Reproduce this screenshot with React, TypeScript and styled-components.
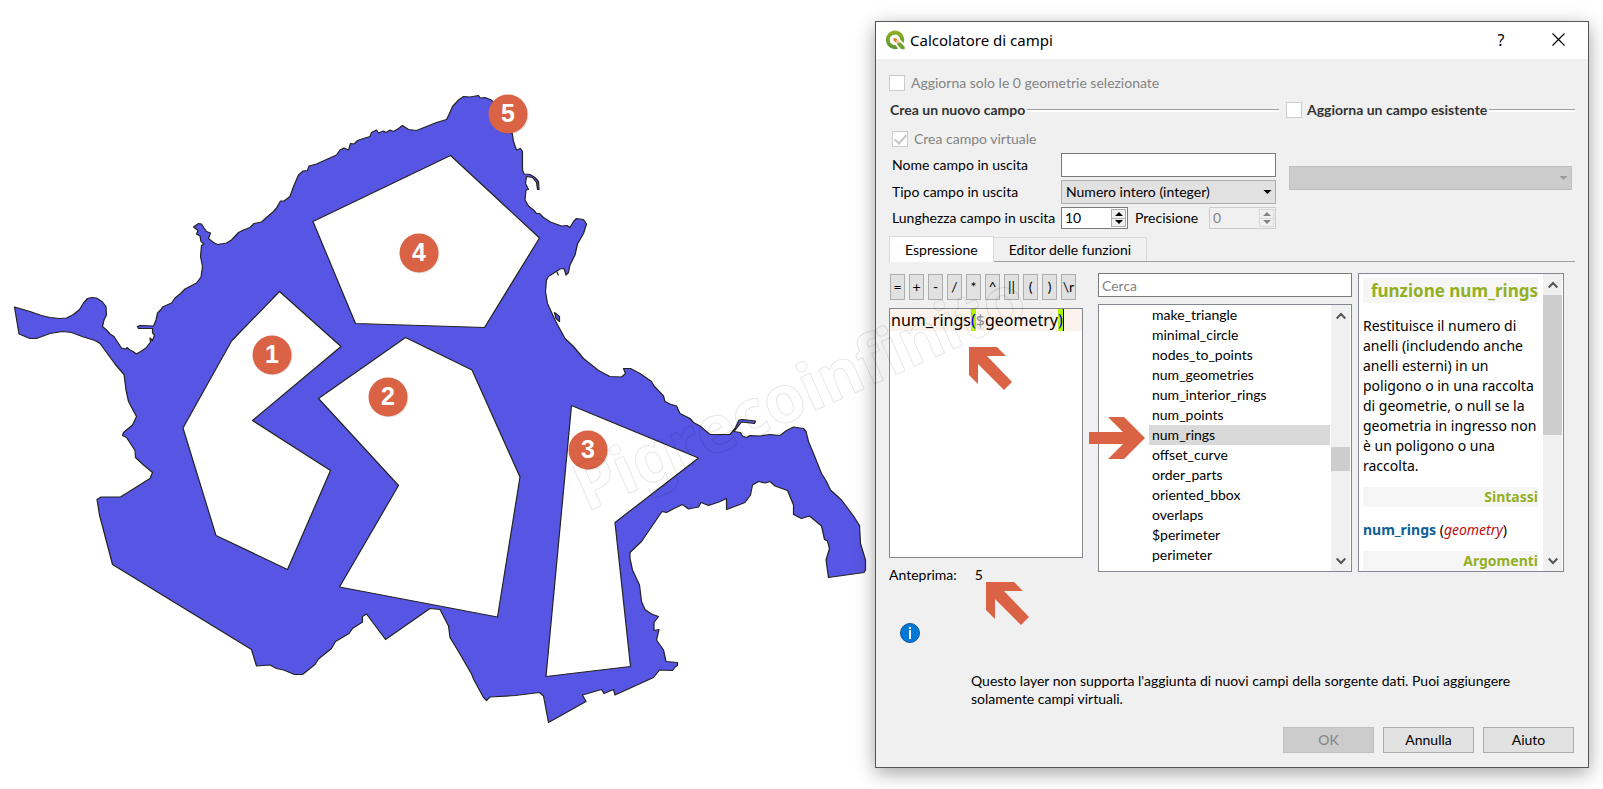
import React, { useState } from "react";
import styled, { createGlobalStyle } from "styled-components";

const UI = 'Lato, "Liberation Sans", sans-serif';
const SEGOE = '"Noto Sans", "Open Sans", sans-serif';
const ORANGE = "#d96344";
const LINE = "#adadad";
const FRAME = "#828790";
const FACE = "#f0f0f0";

const GlobalStyle = createGlobalStyle`
  * { box-sizing: border-box; }
  body { margin: 0; background: #fff; color: #000; font: 14px/18px ${UI}; }
  button, input, select, textarea { font: inherit; color: inherit; margin: 0; border-radius: 0; }
`;

const Page = styled.main`
  position: relative;
  display: grid;
  grid-template-columns: minmax(0, 875fr) minmax(0, 714fr);
  align-items: start;
  min-height: 100vh;
  padding-right: 14px;
  overflow: hidden;
`;
const MapFigure = styled.figure`
  margin: 0;
  svg { display: block; width: 100%; height: auto; }
`;
const Watermark = styled.svg`
  position: absolute;
  top: 0;
  left: 0;
  width: 100%;
  height: auto;
  pointer-events: none;
`;

const Dialog = styled.section`
  margin-top: 21px;
  border: 1px solid #555;
  background: ${FACE};
  box-shadow: 0 5px 18px rgba(0, 0, 0, 0.36);
`;
const TitleBar = styled.header`
  display: flex;
  align-items: center;
  gap: 5px;
  height: 37px;
  padding: 0 0 2px 9px;
  background: #fff;
  svg { display: block; }
`;
const Title = styled.h1`
  flex: 1;
  margin: 0;
  font: 400 15px/20px ${SEGOE};
`;
const TitleButtons = styled.div`
  display: grid;
  grid-template-columns: 54px 60px;
`;
const TitleButton = styled.button`
  display: grid;
  place-items: center;
  height: 35px;
  padding: 0;
  border: 0;
  background: none;
  font: 16px/20px ${SEGOE};
`;
const Body = styled.div`
  padding: 15px 13px 14px;
`;
const CheckLabel = styled.label<{ $bold?: boolean }>`
  display: flex;
  align-items: center;
  gap: ${(p) => (p.$bold ? 5 : 6)}px;
  height: 18px;
  color: ${(p) => (p.$bold ? "#333" : "#838383")};
  font-weight: ${(p) => (p.$bold ? 700 : 400)};
  white-space: nowrap;
`;
const Check = styled.input`
  position: relative;
  flex: none;
  appearance: none;
  width: 16px;
  height: 16px;
  border: 1px solid #ccc;
  background: #fff;
  &:checked::after {
    content: "";
    position: absolute;
    left: 4px;
    top: 0;
    width: 5px;
    height: 10px;
    border: solid #c4c4c4;
    border-width: 0 2px 2px 0;
    transform: rotate(42deg);
  }
`;
const Groups = styled.div`
  display: grid;
  grid-template-columns: minmax(0, 390fr) minmax(0, 289fr);
  gap: 7px;
  margin-top: 9px;
`;
const Group = styled.fieldset`
  min-width: 0;
  margin: 0;
  padding: 0;
  border: 0;
`;
const GroupTitle = styled.div<{ $inset?: boolean }>`
  display: flex;
  align-items: center;
  gap: 2px;
  height: 18px;
  padding-left: ${(p) => (p.$inset ? 1 : 0)}px;
  color: #333;
  font-weight: 700;
  white-space: nowrap;
  &::after {
    content: "";
    flex: 1;
    height: 2px;
    border-top: 1px solid #a0a0a0;
    background: #fff;
  }
`;
const Form = styled.div`
  display: grid;
  grid-template-columns: 169px minmax(0, 1fr);
  row-gap: 3px;
  align-items: center;
  padding: 11px 3px 0;
`;
const ExistingField = styled.div`
  padding: 47px 3px 0;
`;
const Wide = styled.div`
  grid-column: 1 / -1;
  margin-bottom: 2px;
`;
const FieldLabel = styled.label`
  white-space: nowrap;
`;
const TextField = styled.input`
  width: 100%;
  height: 24px;
  padding: 0 3px;
  border: 1px solid #7a7a7a;
  background: #fff;
  &::placeholder { color: #838383; opacity: 1; }
`;
const SelectWrap = styled.div<{ $off?: boolean }>`
  position: relative;
  color: ${(p) => (p.$off ? "#9b9b9b" : "#000")};
  svg {
    position: absolute;
    right: 4px;
    top: 10px;
    pointer-events: none;
  }
  select {
    appearance: none;
    display: block;
    width: 100%;
    height: 24px;
    padding: 0 16px 0 4px;
    border: 1px solid ${(p) => (p.$off ? "#bfbfbf" : LINE)};
    background: ${(p) => (p.$off ? "#ccc" : "#e1e1e1")};
    opacity: 1;
  }
`;
const SpinRow = styled.div`
  display: grid;
  grid-template-columns: 67px 1fr 67px;
  align-items: center;
  label { padding-left: 7px; }
`;
const Spin = styled.div<{ $off?: boolean }>`
  display: flex;
  height: 22px;
  padding: 1px;
  border: 1px solid ${(p) => (p.$off ? "#ccc" : "#7a7a7a")};
  background: ${(p) => (p.$off ? FACE : "#fff")};
  color: ${(p) => (p.$off ? "#838383" : "#000")};
  input {
    flex: 1;
    min-width: 0;
    padding: 0 2px;
    border: 0;
    background: none;
    appearance: textfield;
  }
  input::-webkit-inner-spin-button { appearance: none; }
`;
const SpinButtons = styled.div<{ $off?: boolean }>`
  display: grid;
  grid-template-rows: 1fr 1fr;
  width: 15px;
  border: 1px solid ${(p) => (p.$off ? "#d9d9d9" : LINE)};
  background: ${(p) => (p.$off ? "#d9d9d9" : LINE)};
  gap: 1px;
  button {
    display: grid;
    place-items: center;
    padding: 0;
    border: 0;
    background: ${FACE};
    color: inherit;
  }
`;
const Tabs = styled.div`
  display: flex;
  align-items: flex-end;
  margin-top: 7px;
  border-bottom: 1px solid #a0a0a0;
`;
const Tab = styled.button<{ $active?: boolean }>`
  height: ${(p) => (p.$active ? 26 : 24)}px;
  margin-bottom: ${(p) => (p.$active ? -1 : 0)}px;
  padding: 0 15px;
  border: 1px solid #d9d9d9;
  border-bottom: 0;
  border-left-width: ${(p) => (p.$active ? 1 : 0)}px;
  background: ${(p) => (p.$active ? "#fff" : FACE)};
`;
const Workspace = styled.div`
  display: grid;
  grid-template-columns: minmax(0, 209fr) minmax(0, 260fr) minmax(0, 206fr);
  padding: 11px 11px 0 0;
`;
const EditorColumn = styled.div`
  position: relative;
  display: flex;
  flex-direction: column;
  margin-right: 15px;
  min-width: 0;
`;
const Operators = styled.div`
  display: flex;
  gap: 4px;
  padding: 1px 0 0 1px;
`;
const Operator = styled.button`
  width: 15px;
  height: 26px;
  padding: 0;
  border: 1px solid ${LINE};
  background: #e1e1e1;
  white-space: nowrap;
  overflow: hidden;
`;
const Editor = styled.div`
  position: relative;
  height: 250px;
  margin-top: 8px;
  border: 1px solid ${FRAME};
  background: #fff;
  font: 16px/22px ${SEGOE};
`;
const CodeLine = styled.div`
  padding-left: 1px;
  background: #fdf3ed;
  white-space: pre;
`;
const Paren = styled.span`
  display: inline-block;
  background: #b4f500;
  color: #0000e0;
`;
const Sigil = styled.span`
  color: #909090;
`;
const Caret = styled.span`
  border-left: 1px solid #000;
`;
const EditorInput = styled.textarea`
  position: absolute;
  inset: 0;
  width: 100%;
  height: 100%;
  padding: 0 1px;
  border: 0;
  outline: 0;
  resize: none;
  background: transparent;
  color: transparent;
  caret-color: #000;
`;
const Pointer = styled.svg<{ $x: number; $y: number }>`
  position: absolute;
  left: ${(p) => p.$x}px;
  top: ${(p) => p.$y}px;
  fill: ${ORANGE};
  pointer-events: none;
`;
const Preview = styled.div`
  position: relative;
  display: flex;
  gap: 18px;
  margin-top: 8px;
  height: 18px;
`;
const FunctionColumn = styled.div`
  display: flex;
  flex-direction: column;
  gap: 7px;
  height: 299px;
  margin-right: 6px;
  min-width: 0;
`;
const Framed = styled.div`
  position: relative;
  display: flex;
  flex: 1;
  min-height: 0;
  border: 1px solid ${FRAME};
  background: #fff;
`;
const Functions = styled.ul`
  flex: 1;
  margin: 0;
  padding: 0 1px 0 50px;
  list-style: none;
`;
const FunctionItem = styled.li<{ $selected?: boolean }>`
  height: 20px;
  padding-left: 3px;
  line-height: 20px;
  background: ${(p) => (p.$selected ? "#d9d9d9" : "none")};
`;
const ScrollTrack = styled.div`
  display: flex;
  flex-direction: column;
  flex: none;
  width: 20px;
  border-right: 1px solid #fff;
  background: ${FACE};
`;
const ScrollButton = styled.button`
  display: grid;
  place-items: center;
  width: 19px;
  height: 21px;
  padding: 0;
  border: 0;
  background: none;
`;
const Space = styled.div<{ $grow: number }>`
  flex: ${(p) => p.$grow} 0 0;
`;
const Thumb = styled.div<{ $size: number }>`
  height: ${(p) => p.$size}px;
  background: #cdcdcd;
`;
const Help = styled(Framed)`
  height: 299px;
`;
const HelpText = styled.article`
  flex: 1;
  min-width: 0;
  padding: 4px 5px 0 4px;
  overflow: hidden;
  font: 14px/20px ${SEGOE};
  p { margin: 13px 0 11px; }
`;
const HelpTitle = styled.h2<{ $large?: boolean }>`
  margin: 0;
  background: #f6f6f6;
  color: #93b023;
  font-weight: 700;
  font-size: ${(p) => (p.$large ? 17 : 14)}px;
  line-height: ${(p) => (p.$large ? 25 : 20)}px;
  text-align: right;
  white-space: nowrap;
`;
const Syntax = styled.p`
  white-space: nowrap;
  b { color: #0a6099; }
  i { color: #bf0c0c; }
`;
const Notice = styled.div`
  display: grid;
  grid-template-columns: 71px 1fr;
  padding: 39px 40px 0 11px;
  svg { display: block; }
  p { margin: 49px 0 0; }
`;
const Actions = styled.footer`
  display: flex;
  justify-content: flex-end;
  gap: 9px;
  padding-right: 1px;
  margin-top: 19px;
`;
const ActionButton = styled.button`
  width: 91px;
  height: 26px;
  padding: 0;
  border: 1px solid ${LINE};
  background: #e1e1e1;
  &:disabled { border-color: #bfbfbf; background: #ccc; color: #838383; }
`;

const COAST =
  "M14.5 307L30 311.5L41.5 315.5L50 317.5L60 318.5L66.5 318L73.5 314.5L79.5 309.5L83.5 303L87.5 298.5L91.5 297.5L96.5 298L102.5 302L106 306.5L106.5 315L104 320L102.5 326.5L106.5 330L110 334L114 336.5L118.5 343.5L121.5 348L126 349L127 347.5L130 350L133 351.5L136.5 354L141.5 351L146 348L150.5 342L150 338L152.5 340.5L154.5 335L152.5 333L152.5 328.5L138.5 328.5L137.5 326.5L140 325.5L153.5 326L156 320L157.5 313L161.5 309L162.5 307L171.5 303L175 298L180 294L185 289L196.5 283L201 277L202.5 266.5L200.5 256.5L201.5 245.5L204 244L201 241.5L200 236L196.5 234L198 230.5L193.5 227L198.5 223.5L201.5 224L204 228L206.5 231.5L210.5 233L208.5 238.5L213.5 242.5L217.5 244.5L226.5 243L231.5 240L238.5 232.5L243.5 230L250 227.5L254 223.5L261.5 222L266.5 217.5L273.5 211.5L276.5 208L280.5 201L284 201L290 196.5L293.5 186.5L298.5 175L303 171L307.5 170.5L309 166L316.5 164L336.5 155L340 150L344 148L348.5 150L350.5 143.5L354 144L357.5 140.5L363.5 138.5L370 136.5L371.5 132.5L376.5 130L378.5 133L383.5 131L386 132.5L390 130L393.5 131.5L398.5 128.5L402.5 125.5L408.5 129.5L416.5 130.5L426.5 126.5L436.5 122.5L446.5 119.5L449.5 113.5L452.5 106.5L458.5 100L463.5 96.5L470 97L478.5 95.5L480 98L485 97.5L491.5 100L497 107L510 123L512.5 135L513.5 141.5L516.5 150L520.5 148.5L522.5 151.5L522.5 170L524 174L530 174.5L535 177.5L538.5 181.5L539 189.5L537.5 189.5L536.5 182.5L532.5 177.5L526.5 176.5L525.5 183.5L528.5 189.5L526 190L525 200L528.5 206L533.5 210L536.5 213.5L539.5 213.5L543.5 217.5L550.5 222L561.5 226L567 225.5L570 227.5L573.5 221.5L576.5 218.5L583.5 219.5L586.5 224L583.5 233.5L577.5 244L575 255L570 265L568.5 272.5L566 275L564 268.5L560 269L548.5 276.5L546.5 280L545.5 291.5L547.5 303.5L555 320L565 338.5L573.5 346.5L583.5 358.5L598.5 370.5L610 376.5L621.5 377L625.5 373.5L623.5 368.5L630.5 368.5L640 373.5L651.5 381.5L654 386L663.5 396L665 401.5L670 404L676.5 406L680 413.5L690 418.5L693.5 422.5L700 426L710 434.5L730 434.5L735 428.5L739 420L742.5 419.5L755.5 421L754.5 423.5L741.5 422L734 431.5L740.5 432.5L742.5 436L746.5 437.5L750 435.5L760 436L770 434.5L780 435.5L786.5 430.5L793.5 427L803.5 428.5L806 431.5L808.5 441.5L813.5 453.5L821.5 473.5L826.5 481.5L830.5 490L841.5 500L853.5 516L859.5 525.5L860.5 543.5L865.5 560L865.5 570L864 572.5L828.5 577.5L826 560L829.5 548.5L827.5 541L824.5 539.5L821.5 526L809.5 516L801.5 518.5L793.5 514.5L793.5 505L787.5 490.5L775 486L770 481.5L765 483L758.5 481.5L752.5 485L750.5 495L745 502.5L736 506L726.5 509.5L726.5 498.5L719 502L708.5 505.5L701 502.5L698.5 507L688.5 509L682.5 504.5L674 508.5L666.5 512.5L662 511.5L641.5 541.5L630 552.5L630 558.5L632.5 570L639.5 585L641.5 601.5L645 609.5L651.5 614L658.5 616.5L654 622.5L654 630.5L659 629.5L656.5 640L663.5 650L666 661.5L677.5 662.5L677.5 665.5L675 667L672.5 670.5L659.5 670L653.5 677.5L615 695L613.5 689.5L604 693.5L601.5 689.5L582.5 695L586 701.5L548.5 722.5L543.5 696L539.5 692.5L515 695.5L490 697L486.5 700.5L483.5 697.5L474 680L471.5 674L458.5 651.5L450 637.5L448.5 626L440 609.5L430 608.5L385.5 639.5L366.5 614L362.5 616.5L362.5 622L352.5 628.5L349 633.5L335.5 641.5L331.5 648.5L318.5 659L315 664.5L302.5 674.5L294.5 674.5L283.5 670L276.5 668.5L270 665L256.5 666L251.5 649.5L112.5 564.5L99.5 515L97 499.5L101 497L120.5 497L150 478.5L152.5 472.5L143.5 465L135.5 457.5L135 450.5L126.5 437.5L122.5 435.5L123.5 432.5L132.5 425L136.5 416.5L128.5 401.5L126 390L124 374.5L115 364L100 343.5L95 340.5L83.5 337L71.5 332.5L62.5 331.5L50 333.5L36.5 338.5L30 338.5L19 334Z";

const ISLAND = "M554.5 312.5L559.5 316.5L559.5 321.5L556 318.5Z M556.5 271L558.5 275.5";

const HOLES = [
  "279.5,291.5 231.5,341 183,428 216,535.5 287.5,569.5 330.5,470.5 252.5,420.5 341,346.5",
  "405.5,337.5 472,370 520,477 497.5,617 339.5,587 398.5,485.5 318.5,398.5",
  "571.5,405.5 698.5,458 615,522.5 630.5,666.5 546,676.5",
  "450.5,155.5 539.5,238 484.5,327.5 355.5,323.5 313,221.5",
];

const MARKERS = [
  { n: 1, x: 272, y: 355 },
  { n: 2, x: 388, y: 397 },
  { n: 3, x: 588, y: 450 },
  { n: 4, x: 419, y: 253 },
  { n: 5, x: 508, y: 114 },
];

const OPERATORS = ["=", "+", "-", "/", "*", "^", "||", "(", ")", "\\r"];

const FUNCTIONS = [
  "make_triangle",
  "minimal_circle",
  "nodes_to_points",
  "num_geometries",
  "num_interior_rings",
  "num_points",
  "num_rings",
  "offset_curve",
  "order_parts",
  "oriented_bbox",
  "overlaps",
  "$perimeter",
  "perimeter",
];

function PolygonMap() {
  return (
    <MapFigure>
      <svg viewBox="0 0 875 789" role="img" aria-label="Poligono con quattro anelli interni">
        <g fill="#5755e3" stroke="#232323" strokeWidth="1.2" strokeLinejoin="round">
          <path d={COAST} />
          <path d={ISLAND} />
          {HOLES.map((points) => (
            <polygon key={points} points={points} fill="#fff" />
          ))}
        </g>
        {MARKERS.map((m) => (
          <g key={m.n}>
            <circle cx={m.x + 1} cy={m.y + 1} r="19.5" fill="#000" opacity="0.1" />
            <circle cx={m.x} cy={m.y} r="19.5" fill={ORANGE} />
            <text
              x={m.x}
              y={m.y + 8}
              textAnchor="middle"
              fill="#fff"
              fontFamily="Liberation Sans, sans-serif"
              fontWeight="700"
              fontSize="25"
            >
              {m.n}
            </text>
          </g>
        ))}
      </svg>
    </MapFigure>
  );
}

function QgisLogo() {
  return (
    <svg width="20" height="20" viewBox="0 0 20 20" aria-hidden="true">
      <defs>
        <linearGradient id="leaf" x1="0" y1="0" x2="0" y2="1">
          <stop offset="0" stopColor="#93b023" />
          <stop offset="1" stopColor="#589632" />
        </linearGradient>
      </defs>
      <path
        fill="url(#leaf)"
        fillRule="evenodd"
        d="M9.8 .5a9.3 9.3 0 1 0 3.4 18.1l-3-3.6a5.2 5.2 0 1 1 4.8-5.6l3.6 3.7A9.3 9.3 0 0 0 9.8 .5z"
      />
      <path fill="#6fa32c" d="M12.4 12.4h3l4.2 4.2v2.7h-3.2l-4-4.2z" />
      <path fill="#ee7913" d="M8.4 8.2h2.6l2.2 2.2h-2v2.4l-2.8-2.4z" />
      <path fill="#f4b27c" d="M11.2 10.4h2l2.2 2h-3v2.7l-1.2-2.3z" />
    </svg>
  );
}

function Triangle({ up, wide }: { up?: boolean; wide?: boolean }) {
  const w = wide ? 9 : 8;
  return (
    <svg width={w} height="4" viewBox="0 0 8 4" fill="currentColor" aria-hidden="true">
      <path d={up ? "M0 4L4 0L8 4Z" : "M0 0L4 4L8 0Z"} />
    </svg>
  );
}

function SpinBox({ id, value, off }: { id: string; value: number; off?: boolean }) {
  const [n, setN] = useState(value);
  return (
    <Spin $off={off}>
      <input id={id} type="number" value={n} disabled={off} onChange={(e) => setN(Number(e.target.value))} />
      <SpinButtons $off={off}>
        <button type="button" aria-label="Aumenta" disabled={off} onClick={() => setN(n + 1)}>
          <Triangle up />
        </button>
        <button type="button" aria-label="Diminuisci" disabled={off} onClick={() => setN(n - 1)}>
          <Triangle />
        </button>
      </SpinButtons>
    </Spin>
  );
}

function ScrollBar({ before, size, after }: { before: number; size: number; after: number }) {
  return (
    <ScrollTrack>
      <ScrollButton type="button" aria-label="Scorri su">
        <svg width="10" height="8" viewBox="0 0 10 8" fill="none" stroke="#555" strokeWidth="2">
          <path d="M.7 6.5L5 2L9.3 6.5" />
        </svg>
      </ScrollButton>
      <Space $grow={before} />
      <Thumb $size={size} />
      <Space $grow={after} />
      <ScrollButton type="button" aria-label="Scorri giù">
        <svg width="10" height="8" viewBox="0 0 10 8" fill="none" stroke="#555" strokeWidth="2">
          <path d="M.7 1.5L5 6L9.3 1.5" />
        </svg>
      </ScrollButton>
    </ScrollTrack>
  );
}

function DiagonalArrow({ x, y }: { x: number; y: number }) {
  return (
    <Pointer $x={x} $y={y} width="43" height="43" viewBox="0 0 43 43" aria-hidden="true">
      <polygon points="0,0 28,0 37,9 18,9 43,35 35,43 9,17 9,37 0,28" />
    </Pointer>
  );
}

export default function App() {
  const [selected, setSelected] = useState("num_rings");
  return (
    <Page>
      <GlobalStyle />
      <PolygonMap />
      <Dialog aria-labelledby="title">
        <TitleBar>
          <QgisLogo />
          <Title id="title">Calcolatore di campi</Title>
          <TitleButtons>
            <TitleButton type="button">?</TitleButton>
            <TitleButton type="button" aria-label="Chiudi">
              <svg width="13" height="13" viewBox="0 0 13 13" stroke="#000" strokeWidth="1.2">
                <path d="M.5 .5L12.5 12.5M12.5 .5L.5 12.5" />
              </svg>
            </TitleButton>
          </TitleButtons>
        </TitleBar>
        <Body>
          <CheckLabel>
            <Check type="checkbox" disabled />
            Aggiorna solo le 0 geometrie selezionate
          </CheckLabel>
          <Groups>
            <Group aria-label="Crea un nuovo campo">
              <GroupTitle $inset>Crea un nuovo campo</GroupTitle>
              <Form>
                <Wide>
                  <CheckLabel>
                    <Check type="checkbox" defaultChecked disabled />
                    Crea campo virtuale
                  </CheckLabel>
                </Wide>
                <FieldLabel htmlFor="name">Nome campo in uscita</FieldLabel>
                <TextField id="name" type="text" />
                <FieldLabel htmlFor="type">Tipo campo in uscita</FieldLabel>
                <SelectWrap>
                  <select id="type">
                    <option>Numero intero (integer)</option>
                  </select>
                  <Triangle wide />
                </SelectWrap>
                <FieldLabel htmlFor="length">Lunghezza campo in uscita</FieldLabel>
                <SpinRow>
                  <SpinBox id="length" value={10} />
                  <FieldLabel htmlFor="precision">Precisione</FieldLabel>
                  <SpinBox id="precision" value={0} off />
                </SpinRow>
              </Form>
            </Group>
            <Group aria-label="Aggiorna un campo esistente">
              <GroupTitle>
                <CheckLabel $bold>
                  <Check type="checkbox" />
                  Aggiorna un campo esistente
                </CheckLabel>
              </GroupTitle>
              <ExistingField>
                <SelectWrap $off>
                  <select disabled aria-label="Campo esistente" />
                  <Triangle wide />
                </SelectWrap>
              </ExistingField>
            </Group>
          </Groups>
          <Tabs role="tablist">
            <Tab type="button" role="tab" aria-selected="true" $active>
              Espressione
            </Tab>
            <Tab type="button" role="tab" aria-selected="false">
              Editor delle funzioni
            </Tab>
          </Tabs>
          <Workspace>
            <EditorColumn>
              <Operators>
                {OPERATORS.map((op) => (
                  <Operator key={op} type="button">
                    {op}
                  </Operator>
                ))}
              </Operators>
              <Editor>
                <CodeLine aria-hidden="true">
                  num_rings<Paren>(</Paren>
                  <Sigil>$</Sigil>geometry<Paren>)</Paren>
                  <Caret />
                </CodeLine>
                <EditorInput aria-label="Espressione" spellCheck={false} defaultValue="num_rings($geometry)" />
                <DiagonalArrow x={79} y={38} />
              </Editor>
              <Preview>
                <span>Anteprima:</span>
                <output>5</output>
                <DiagonalArrow x={97} y={16} />
              </Preview>
            </EditorColumn>
            <FunctionColumn>
              <TextField type="search" placeholder="Cerca" aria-label="Cerca" />
              <Framed>
                <Functions role="listbox" aria-label="Funzioni">
                  {FUNCTIONS.map((name) => (
                    <FunctionItem
                      key={name}
                      role="option"
                      aria-selected={name === selected}
                      $selected={name === selected}
                      onClick={() => setSelected(name)}
                    >
                      {name}
                    </FunctionItem>
                  ))}
                </Functions>
                <ScrollBar before={121} size={24} after={79} />
                <Pointer $x={-10} $y={112} width="56" height="42" viewBox="0 0 56 42" aria-hidden="true">
                  <polygon points="0,15 34,15 19,0 35,0 56,21 35,42 19,42 34,27 0,27" />
                </Pointer>
              </Framed>
            </FunctionColumn>
            <Help>
              <HelpText>
                <HelpTitle $large>funzione num_rings</HelpTitle>
                <p>
                  Restituisce il numero di anelli (includendo anche anelli esterni) in un poligono o in una raccolta di
                  geometrie, o null se la geometria in ingresso non è un poligono o una raccolta.
                </p>
                <HelpTitle>Sintassi</HelpTitle>
                <Syntax>
                  <b>num_rings</b> (<i>geometry</i>)
                </Syntax>
                <HelpTitle>Argomenti</HelpTitle>
              </HelpText>
              <ScrollBar before={0} size={140} after={115} />
            </Help>
          </Workspace>
          <Notice>
            <svg width="20" height="20" viewBox="0 0 20 20" role="img" aria-label="Informazione">
              <circle cx="10" cy="10" r="9.5" fill="#0078d7" stroke="#0b5599" />
              <rect x="9" y="4" width="2" height="2" fill="#fff" />
              <rect x="9" y="7" width="2" height="9" fill="#fff" />
            </svg>
            <p>
              Questo layer non supporta l'aggiunta di nuovi campi della sorgente dati. Puoi aggiungere solamente campi
              virtuali.
            </p>
          </Notice>
          <Actions>
            <ActionButton type="button" disabled>
              OK
            </ActionButton>
            <ActionButton type="button">Annulla</ActionButton>
            <ActionButton type="button">Aiuto</ActionButton>
          </Actions>
        </Body>
      </Dialog>
      <Watermark viewBox="0 0 1603 789" aria-hidden="true">
        <text
          transform="translate(587 512) rotate(-24)"
          fill="none"
          stroke="#000"
          strokeOpacity="0.1"
          fontFamily="Noto Sans, sans-serif"
          fontWeight="700"
          fontSize="66"
        >
          Pigrecoinfinito
        </text>
      </Watermark>
    </Page>
  );
}
